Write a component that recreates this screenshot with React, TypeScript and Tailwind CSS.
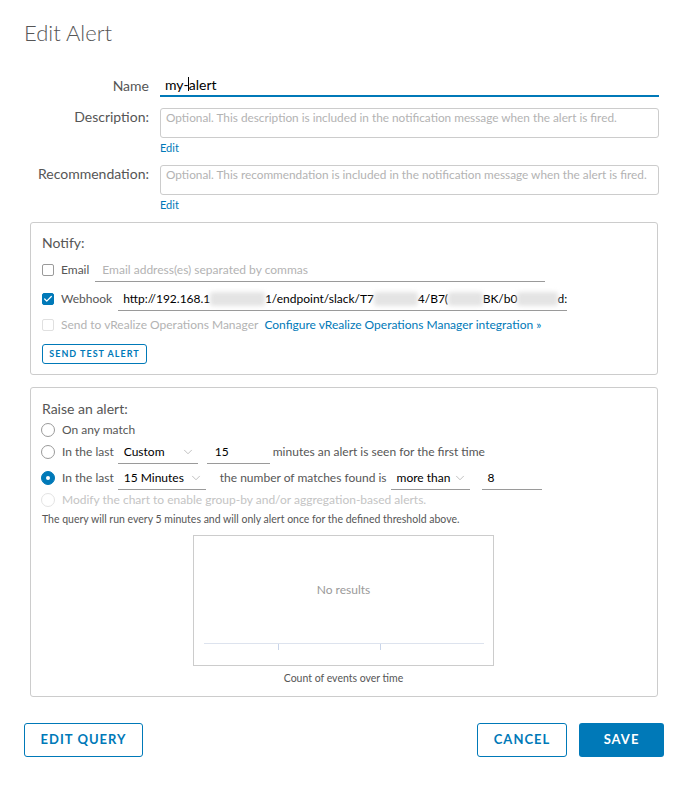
import { ChevronDown, Check } from 'lucide-react';

const Checkbox = ({ checked = false, disabled = false }: { checked?: boolean; disabled?: boolean }) => (
  <span
    className={`flex h-[12px] w-[12px] shrink-0 items-center justify-center rounded-[2px] border ${
      checked ? 'border-[#0079b8] bg-[#0079b8]' : disabled ? 'border-[#e0e0e0] bg-white' : 'border-[#9a9a9a] bg-white'
    }`}
  >
    {checked && <Check size={10} strokeWidth={3} className="text-white" />}
  </span>
);

const Radio = ({ checked = false, disabled = false }: { checked?: boolean; disabled?: boolean }) => (
  <span
    className={`flex h-[14px] w-[14px] shrink-0 items-center justify-center rounded-full border ${
      checked ? 'border-[#0079b8] bg-[#0079b8]' : disabled ? 'border-[#e3e3e3] bg-white' : 'border-[#9a9a9a] bg-white'
    }`}
  >
    {checked && <span className="h-[4px] w-[4px] rounded-full bg-white" />}
  </span>
);

const Select = ({ value, width }: { value: string; width: string }) => (
  <div className={`flex h-[24px] items-center justify-between whitespace-nowrap border-b border-[#9a9a9a] pl-[6px] pr-[3px] text-[12px] text-[#000] ${width}`}>
    <span>{value}</span>
    <ChevronDown size={14} strokeWidth={1.2} className="text-[#a8a8a8]" />
  </div>
);

const Blur = ({ w }: { w: string }) => <span className={`inline-block h-[14px] rounded-[3px] bg-[#e4e4e4] blur-[2px] ${w}`} />;

const App = () => {
  return (
    <div className="flex h-[786px] w-[688px] flex-col bg-white font-['Lato',sans-serif] text-[#565656]">
      <h1 className="mt-[19px] pl-[24px] text-[22px] font-light leading-[28px] text-[#565656]">Edit Alert</h1>

      {/* Name */}
      <div className="mt-[26px] flex h-[24px] items-center">
        <label className="w-[149px] text-right text-[14px]">Name</label>
        <div className="ml-[11px] flex h-[24px] w-[499px] items-center border-b-2 border-[#0079b8] pl-[5px] text-[14px] text-[#000]">
          my-<span className="-mx-[0.5px] inline-block h-[14px] w-[1px] bg-black" />alert
        </div>
      </div>

      {/* Description */}
      <div className="mt-[11px] flex">
        <label className="w-[149px] text-right text-[14px] leading-[18px]">Description:</label>
        <div className="ml-[11px] flex flex-col">
          <div className="h-[30px] w-[499px] overflow-hidden whitespace-nowrap rounded-[3px] border border-[#cccccc] px-[5px] pt-[1px] text-[11.8px] leading-[16px] text-[#b3b3b3]">
            Optional. This description is included in the notification message when the alert is fired.
          </div>
          <a className="mt-[3px] text-[11px] leading-[14px] text-[#0079b8]">Edit</a>
        </div>
      </div>

      {/* Recommendation */}
      <div className="mt-[10px] flex">
        <label className="w-[149px] text-right text-[14px] leading-[18px]">Recommendation:</label>
        <div className="ml-[11px] flex flex-col">
          <div className="h-[30px] w-[499px] overflow-hidden whitespace-nowrap rounded-[3px] border border-[#cccccc] px-[5px] pt-[1px] text-[11.8px] leading-[16px] text-[#b3b3b3]">
            Optional. This recommendation is included in the notification message when the alert is fired.
          </div>
          <a className="mt-[3px] text-[11px] leading-[14px] text-[#0079b8]">Edit</a>
        </div>
      </div>

      {/* Notify */}
      <div className="ml-[30px] mt-[10px] w-[628px] rounded-[3px] border border-[#cccccc] pb-[10px] pl-[11px] pt-[10px]">
        <div className="text-[14px] leading-[20px]">Notify:</div>
        <div className="mt-[5px] flex h-[24px] items-center">
          <Checkbox />
          <span className="ml-[7px] text-[12px]">Email</span>
          <div className="ml-[6px] flex h-[24px] w-[450px] items-center border-b border-[#9a9a9a] pl-[7px] text-[12px] text-[#b3b3b3]">
            Email address(es) separated by commas
          </div>
        </div>
        <div className="mt-[5px] flex h-[24px] items-center">
          <Checkbox checked />
          <span className="ml-[7px] text-[12px]">Webhook</span>
          <div className="ml-[6px] flex h-[24px] w-[449px] items-center overflow-hidden whitespace-nowrap border-b border-[#9a9a9a] pl-[5px] text-[12px] text-[#000]">
            http://192.168.1<Blur w="w-[60px]" />1/endpoint/slack/T7<Blur w="w-[48px]" />4/B7(<Blur w="w-[38px]" />BK/b0<Blur w="w-[44px]" />d:
          </div>
        </div>
        <div className="mt-[4px] flex h-[20px] items-center">
          <Checkbox disabled />
          <span className="ml-[7px] text-[12px] text-[#b3b3b3]">Send to vRealize Operations Manager</span>
          <a className="ml-[6px] text-[12px] text-[#0079b8]">Configure vRealize Operations Manager integration »</a>
        </div>
        <button className="mt-[9px] flex h-[20px] w-[105px] items-center justify-center rounded-[3px] border border-[#0079b8] text-[9px] font-bold tracking-[1px] text-[#0079b8]">
          SEND TEST ALERT
        </button>
      </div>

      {/* Raise an alert */}
      <div className="ml-[30px] mt-[12px] w-[628px] rounded-[3px] border border-[#cccccc] pb-[11px] pl-[10px] pt-[11px]">
        <div className="pl-[1px] text-[14px] leading-[20px]">Raise an alert:</div>
        <div className="mt-[1px] flex h-[20px] items-center">
          <Radio />
          <span className="ml-[7px] text-[12px]">On any match</span>
        </div>
        <div className="flex h-[24px] items-center">
          <Radio />
          <span className="ml-[7px] text-[12px]">In the last</span>
          <div className="ml-[4px]"><Select value="Custom" width="w-[80px]" /></div>
          <div className="ml-[9px] flex h-[24px] w-[63px] items-center border-b border-[#9a9a9a] pl-[8px] text-[12px] text-[#000]">15</div>
          <span className="ml-[3px] text-[12px]">minutes an alert is seen for the first time</span>
        </div>
        <div className="mt-[2px] flex h-[24px] items-center">
          <Radio checked />
          <span className="ml-[7px] text-[12px]">In the last</span>
          <div className="ml-[4px]"><Select value="15 Minutes" width="w-[88px]" /></div>
          <span className="ml-[14px] text-[12px]">the number of matches found is</span>
          <div className="ml-[4px]"><Select value="more than" width="w-[79px]" /></div>
          <div className="ml-[12px] flex h-[24px] w-[60px] items-center border-b border-[#9a9a9a] pl-[6px] text-[12px] text-[#000]">8</div>
        </div>
        <div className="flex h-[20px] items-center">
          <Radio disabled />
          <span className="ml-[7px] text-[12px] text-[#c4c4c4]">Modify the chart to enable group-by and/or aggregation-based alerts.</span>
        </div>
        <div className="mt-[2px] pl-[1px] text-[10.5px] leading-[14px]">
          The query will run every 5 minutes and will only alert once for the defined threshold above.
        </div>
        <div className="ml-[152px] mt-[9px] flex h-[131px] w-[301px] flex-col items-center border border-[#cccccc]">
          <div className="mt-[46px] text-[12px] leading-[16px] text-[#9a9a9a]">No results</div>
          <div className="mt-[45px] flex h-[7px] w-[280px] border-t border-[#dde3ee]">
            <span className="ml-[74px] h-[6px] w-px bg-[#c9d5ea]" />
            <span className="ml-[101px] h-[6px] w-px bg-[#c9d5ea]" />
          </div>
        </div>
        <div className="ml-[152px] mt-[5px] w-[301px] text-center text-[10.5px] leading-[14px]">Count of events over time</div>
      </div>

      {/* Footer */}
      <div className="mt-[26px] flex px-[24px]">
        <button className="flex h-[34px] w-[119px] items-center justify-center rounded-[3px] border border-[#0079b8] text-[13px] font-bold tracking-[1px] text-[#0079b8]">
          EDIT QUERY
        </button>
        <div className="flex-1" />
        <button className="flex h-[34px] w-[90px] items-center justify-center rounded-[3px] border border-[#0079b8] text-[13px] font-bold tracking-[1px] text-[#0079b8]">
          CANCEL
        </button>
        <button className="ml-[12px] flex h-[34px] w-[85px] items-center justify-center rounded-[3px] bg-[#0079b8] text-[13px] font-bold tracking-[1px] text-white">
          SAVE
        </button>
      </div>
    </div>
  );
};

export default App;
